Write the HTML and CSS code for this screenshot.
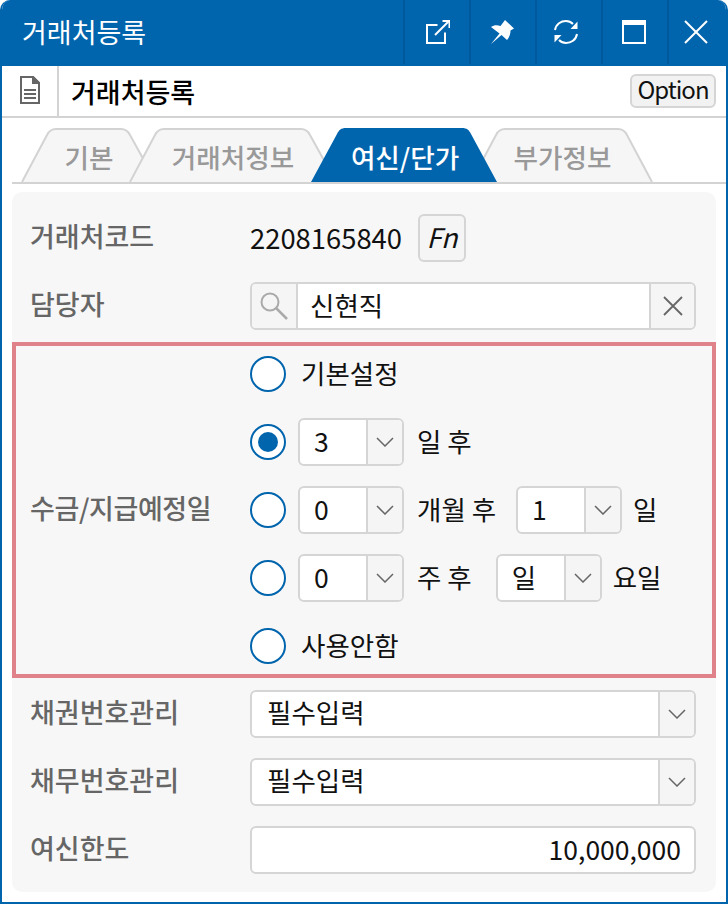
FILE: index.html
```html
<!DOCTYPE html>
<html>
<head>
  <meta charset="utf-8">
  <title>거래처등록</title>
  <link rel="stylesheet" href="styles.css">
</head>
<body>
<div class="window">
  <div class="titlebar">
    <div class="title">거래처등록</div>
    <div class="title-btn btn-popout">
      <svg width="24" height="24" viewBox="0 0 24 24" fill="none" stroke="#fff" stroke-width="2"><path d="M11.500 5H1v18h18V12.500"/><path d="M9 15L23 1"/><path d="M16.500 1H23.500V8"/></svg>
    </div>
    <div class="title-btn btn-pin">
      <svg width="24" height="24" viewBox="0 0 24 24" fill="#fff"><path d="M14 0L23 8.500 19.500 10.500C19.500 14 18.500 17 16 20L10.500 15 0 24 8.500 13.500 0 7C3 5 6 5 9.500 6z"/></svg>
    </div>
    <div class="title-btn btn-refresh">
      <svg width="24" height="24" viewBox="0 0 24 24" fill="none" stroke="#fff" stroke-width="2"><path d="M1 10C2 4 7 1 12 1c3 0 5 1 7 3"/><path d="M23 14c-1 6-6 9-11 9-3 0-5-1-7-3"/><path d="M23.500 1.500V9H16.500z" fill="#fff" stroke="none"/><path d="M.5 22.500V15H7.500z" fill="#fff" stroke="none"/></svg>
    </div>
    <div class="title-btn btn-window">
      <svg width="24" height="24" viewBox="0 0 24 24" fill="none" stroke="#fff" stroke-width="2"><path d="M1 1h22v22H1z"/><path d="M1 3h22" stroke-width="4"/></svg>
    </div>
    <div class="title-btn btn-close">
      <svg width="24" height="24" viewBox="0 0 24 24" fill="none" stroke="#fff" stroke-width="2"><path d="M1 1l22 22M23 1L1 23"/></svg>
    </div>
  </div>

  <div class="toolbar">
    <div class="doc-icon">
      <svg width="20" height="28" viewBox="0 0 20 28" fill="none" stroke="#666" stroke-width="2"><path d="M1 1h12l6 6v20H1z"/><path d="M13 1l6 6h-6z" fill="#666"/><path d="M4 14h12M4 18h12M4 22h12"/></svg>
    </div>
    <div class="page-title">거래처등록</div>
    <div class="option-btn">Option</div>
  </div>

  <div class="tabs">
    <div class="tab tab-1">
      <svg class="tab-shape" width="136" height="54" viewBox="0 0 136 54"><path d="M1 54L26 7c2-4 5-6 9-6h65c4 0 7 2 9 6l26 47" fill="#f6f6f6" stroke="#d3d3d3" stroke-width="2"/></svg>
      <span class="tab-label">기본</span>
    </div>
    <div class="tab tab-2">
      <svg class="tab-shape" width="208" height="54" viewBox="0 0 208 54"><path d="M1 54L26 7c2-4 5-6 9-6h137c4 0 7 2 9 6l26 47" fill="#f6f6f6" stroke="#d3d3d3" stroke-width="2"/></svg>
      <span class="tab-label">거래처정보</span>
    </div>
    <div class="tab tab-4">
      <svg class="tab-shape" width="183" height="54" viewBox="0 0 183 54"><path d="M1 54L26 7c2-4 5-6 9-6h113c4 0 7 2 9 6l25 47" fill="#f6f6f6" stroke="#d3d3d3" stroke-width="2"/></svg>
      <span class="tab-label">부가정보</span>
    </div>
    <div class="tab tab-3 active">
      <svg class="tab-shape" width="186" height="54" viewBox="0 0 186 54"><path d="M0 54L26 6c2-4 4-6 9-6h116c5 0 7 2 9 6l26 48z" fill="#0165ae"/></svg>
      <span class="tab-label">여신/단가</span>
    </div>
  </div>

  <div class="panel">
    <div class="row">
      <div class="label">거래처코드</div>
      <div class="code">2208165840</div>
      <div class="fn-btn">Fn</div>
    </div>
    <div class="row">
      <div class="label">담당자</div>
      <div class="field grow">
        <div class="addon addon-left">
          <svg width="30" height="30" viewBox="0 0 30 30" fill="none" stroke="#aaa" stroke-width="2"><circle cx="11" cy="11" r="8.500"/><path d="M17 17l11 11" stroke-width="2.500"/></svg>
        </div>
        <div class="field-text">신현직</div>
        <div class="addon addon-right">
          <svg width="20" height="20" viewBox="0 0 20 20" fill="none" stroke="#666" stroke-width="1.800"><path d="M1 1l18 18M19 1L1 19"/></svg>
        </div>
      </div>
    </div>

    <div class="date-group">
      <div class="label">수금/지급예정일</div>
      <div class="date-options">
        <div class="opt-row">
          <span class="radio"></span>
          <span class="opt-text">기본설정</span>
        </div>
        <div class="opt-row">
          <span class="radio checked"></span>
          <div class="field select-small">
            <div class="field-text">3</div>
            <div class="addon addon-arrow"><svg class="chevron" width="18" height="10" viewBox="0 0 18 10"><path d="M1 1l8 8 8-8"/></svg></div>
          </div>
          <span class="unit">일 후</span>
        </div>
        <div class="opt-row">
          <span class="radio"></span>
          <div class="field select-small">
            <div class="field-text">0</div>
            <div class="addon addon-arrow"><svg class="chevron" width="18" height="10" viewBox="0 0 18 10"><path d="M1 1l8 8 8-8"/></svg></div>
          </div>
          <span class="unit">개월 후</span>
          <div class="field select-small gap-month">
            <div class="field-text">1</div>
            <div class="addon addon-arrow"><svg class="chevron" width="18" height="10" viewBox="0 0 18 10"><path d="M1 1l8 8 8-8"/></svg></div>
          </div>
          <span class="unit unit-end">일</span>
        </div>
        <div class="opt-row">
          <span class="radio"></span>
          <div class="field select-small">
            <div class="field-text">0</div>
            <div class="addon addon-arrow"><svg class="chevron" width="18" height="10" viewBox="0 0 18 10"><path d="M1 1l8 8 8-8"/></svg></div>
          </div>
          <span class="unit">주 후</span>
          <div class="field select-small gap-week">
            <div class="field-text">일</div>
            <div class="addon addon-arrow"><svg class="chevron" width="18" height="10" viewBox="0 0 18 10"><path d="M1 1l8 8 8-8"/></svg></div>
          </div>
          <span class="unit unit-end">요일</span>
        </div>
        <div class="opt-row">
          <span class="radio"></span>
          <span class="opt-text">사용안함</span>
        </div>
      </div>
    </div>

    <div class="row">
      <div class="label">채권번호관리</div>
      <div class="field grow">
        <div class="field-text wide-text">필수입력</div>
        <div class="addon addon-arrow"><svg class="chevron" width="18" height="10" viewBox="0 0 18 10"><path d="M1 1l8 8 8-8"/></svg></div>
      </div>
    </div>
    <div class="row">
      <div class="label">채무번호관리</div>
      <div class="field grow">
        <div class="field-text wide-text">필수입력</div>
        <div class="addon addon-arrow"><svg class="chevron" width="18" height="10" viewBox="0 0 18 10"><path d="M1 1l8 8 8-8"/></svg></div>
      </div>
    </div>
    <div class="row">
      <div class="label">여신한도</div>
      <div class="field grow">
        <div class="field-text amount">10,000,000</div>
      </div>
    </div>
  </div>
</div>
</body>
</html>
```

FILE: styles.css
```css
* {
  box-sizing: border-box;
}

body {
  margin: 0;
  background: #fff;
  font-family: "Noto Sans CJK KR", "Noto Sans", sans-serif;
  font-size: 26.5px;
  color: #111;
}

.window {
  width: 728px;
  height: 904px;
  border: 2px solid #0165ae;
  border-top: 0;
  border-radius: 10px 10px 0 0;
  overflow: hidden;
}

.titlebar {
  display: flex;
  height: 66px;
  margin: 0 -2px;
  background: #0165ae;
  color: #fff;
}
.title {
  flex: 1;
  padding-left: 22px;
  line-height: 64px;
  font-size: 27px;
}
.title-btn {
  width: 66px;
  height: 64px;
  padding-top: 20px;
  border-left: 2px solid #00599c;
}
.title-btn svg {
  display: block;
}
.btn-popout { padding-left: 21px; }
.btn-pin { padding-left: 20px; }
.btn-refresh { padding-left: 17px; }
.btn-window { padding-left: 19px; }
.btn-close { width: 61px; padding-left: 15px; }

.toolbar {
  display: flex;
  align-items: center;
  height: 52px;
  border-bottom: 2px solid #d3d3d3;
}
.doc-icon {
  width: 57px;
  height: 50px;
  padding-bottom: 2px;
  border-right: 2px solid #d3d3d3;
  display: flex;
  align-items: center;
  justify-content: center;
}
.page-title {
  flex: 1;
  padding-left: 12px;
  font-size: 27px;
  font-weight: 500;
  color: #000;
}
.option-btn {
  width: 86px;
  height: 34px;
  margin-right: 10px;
  border: 2px solid #d5d5d5;
  border-radius: 6px;
  background: #f2f2f2;
  font-size: 24px;
  letter-spacing: -1px;
  line-height: 26px;
  text-align: center;
}

.tabs {
  display: flex;
  height: 56px;
  margin: 10px 0 0 10px;
  padding-left: 9px;
  border-bottom: 2px solid #d3d3d3;
}
.tab {
  position: relative;
  height: 54px;
  display: flex;
  align-items: center;
  justify-content: center;
  color: #999;
  font-size: 26.6px;
  font-weight: 500;
}
.tab-shape {
  position: absolute;
  top: 0;
  left: 0;
}
.tab-label {
  position: relative;
  margin-top: 2px;
}
.tab-1 { width: 136px; }
.tab-2 { width: 208px; margin-left: -28px; }
.tab-3 { width: 186px; margin-left: -342px; padding-left: 2px; }
.tab-4 { width: 183px; margin-left: 133px; padding-left: 2px; }
.tab.active {
  color: #fff;
}

.panel {
  height: 700px;
  margin: 8px 10px 0;
  padding: 22px 20px 18px 18px;
  background: #f7f7f7;
  border-radius: 10px;
  display: flex;
  flex-direction: column;
  gap: 20px;
}

.row {
  display: flex;
  align-items: center;
  height: 48px;
}
.label {
  width: 220px;
  flex: none;
  color: #666;
  font-size: 27px;
  font-weight: 500;
  margin-top: -6px;
}
.code {
  width: 168px;
  font-size: 27.4px;
  margin-top: -2px;
}
.fn-btn {
  width: 48px;
  height: 48px;
  border: 2px solid #d5d5d5;
  border-radius: 6px;
  background: #f5f5f5;
  font-size: 27px;
  font-style: italic;
  line-height: 42px;
  text-align: center;
}

.field {
  display: flex;
  height: 48px;
  border: 2px solid #d5d5d5;
  border-radius: 6px;
  background: #fff;
  overflow: hidden;
}
.grow {
  flex: 1;
}
.field-text {
  flex: 1;
  padding-left: 14px;
  line-height: 42px;
}
.addon-left + .field-text {
  padding-left: 12px;
}
.wide-text {
  padding-left: 15px;
  line-height: 40px;
}
.amount {
  padding: 0 13px 0 0;
  text-align: right;
}
.addon {
  flex: none;
  background: #f5f5f5;
  display: flex;
  align-items: center;
  justify-content: center;
}
.addon-left {
  width: 46px;
  border-right: 2px solid #d5d5d5;
}
.addon-right {
  width: 45px;
  border-left: 2px solid #d5d5d5;
}
.addon-arrow {
  width: 36px;
  border-left: 2px solid #d5d5d5;
}
.chevron {
  fill: none;
  stroke: #666;
  stroke-width: 1.5;
}

.date-group {
  display: flex;
  align-items: center;
  margin: -8px -20px -8px -18px;
  padding: 4px 16px 4px 14px;
  border: 4px solid #e0828a;
}
.date-group .label {
  letter-spacing: -0.4px;
}
.date-options {
  flex: 1;
  display: flex;
  flex-direction: column;
  gap: 20px;
}
.opt-row {
  display: flex;
  align-items: center;
  height: 48px;
}
.radio {
  width: 36px;
  height: 36px;
  flex: none;
  margin-right: 12px;
  border: 2px solid #0165ae;
  border-radius: 50%;
  background: #fff;
  display: flex;
  align-items: center;
  justify-content: center;
}
.radio.checked::after {
  content: "";
  width: 20px;
  height: 20px;
  border-radius: 50%;
  background: #0165ae;
}
.opt-text {
  margin-left: 3px;
  margin-top: -4px;
}
.select-small {
  width: 106px;
  flex: none;
}
.unit {
  margin-left: 13px;
  margin-top: -4px;
}
.unit-end {
  margin-left: 11px;
}
.gap-month {
  margin-left: 20px;
}
.gap-week {
  margin-left: 24px;
}
```
